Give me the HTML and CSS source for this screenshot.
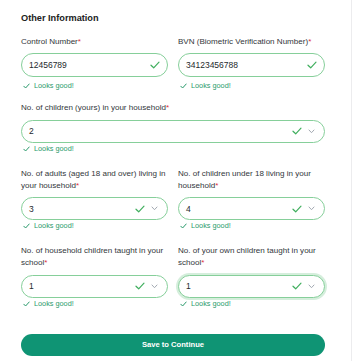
FILE: index.html
```html
<!DOCTYPE html>
<html>
<head>
<meta charset="utf-8">
<link rel="stylesheet" href="styles.css">
</head>
<body>
<div class="card">
  <h2 class="title">Other Information</h2>

  <div class="row row-first">
    <div class="field">
      <label class="label">Control Number<span class="req">*</span></label>
      <div class="control control-text">
        <span class="value">12456789</span>
        <svg class="ok" width="10" height="8" viewBox="0 0 10 8"><polyline points="1,4.2 3.7,6.8 9,1.2" fill="none" stroke="#3fae5d" stroke-width="1.2" stroke-linecap="round" stroke-linejoin="round"/></svg>
      </div>
      <div class="feedback feedback-text"><svg width="7" height="6" viewBox="0 0 7 6"><polyline points="0.8,3.2 2.6,5 6.2,1" fill="none" stroke="#2a9a6c" stroke-width="1" stroke-linecap="round" stroke-linejoin="round"/></svg>Looks good!</div>
    </div>
    <div class="field">
      <label class="label">BVN (Biometric Verification Number)<span class="req">*</span></label>
      <div class="control control-text">
        <span class="value">34123456788</span>
        <svg class="ok" width="10" height="8" viewBox="0 0 10 8"><polyline points="1,4.2 3.7,6.8 9,1.2" fill="none" stroke="#3fae5d" stroke-width="1.2" stroke-linecap="round" stroke-linejoin="round"/></svg>
      </div>
      <div class="feedback feedback-text"><svg width="7" height="6" viewBox="0 0 7 6"><polyline points="0.8,3.2 2.6,5 6.2,1" fill="none" stroke="#2a9a6c" stroke-width="1" stroke-linecap="round" stroke-linejoin="round"/></svg>Looks good!</div>
    </div>
  </div>

  <div class="row row-single">
    <div class="field">
      <label class="label">No. of children (yours) in your household<span class="req">*</span></label>
      <div class="control">
        <span class="value">2</span>
        <svg class="ok" width="10" height="8" viewBox="0 0 10 8"><polyline points="1,4.2 3.7,6.8 9,1.2" fill="none" stroke="#3fae5d" stroke-width="1.2" stroke-linecap="round" stroke-linejoin="round"/></svg>
        <svg class="chev" width="7" height="5" viewBox="0 0 7 5"><polyline points="1,1 3.5,3.7 6,1" fill="none" stroke="#a3a9b2" stroke-width="1" stroke-linecap="round" stroke-linejoin="round"/></svg>
      </div>
      <div class="feedback"><svg width="7" height="6" viewBox="0 0 7 6"><polyline points="0.8,3.2 2.6,5 6.2,1" fill="none" stroke="#2a9a6c" stroke-width="1" stroke-linecap="round" stroke-linejoin="round"/></svg>Looks good!</div>
    </div>
  </div>

  <div class="row">
    <div class="field">
      <label class="label">No. of adults (aged 18 and over) living in your household<span class="req">*</span></label>
      <div class="control">
        <span class="value">3</span>
        <svg class="ok" width="10" height="8" viewBox="0 0 10 8"><polyline points="1,4.2 3.7,6.8 9,1.2" fill="none" stroke="#3fae5d" stroke-width="1.2" stroke-linecap="round" stroke-linejoin="round"/></svg>
        <svg class="chev" width="7" height="5" viewBox="0 0 7 5"><polyline points="1,1 3.5,3.7 6,1" fill="none" stroke="#a3a9b2" stroke-width="1" stroke-linecap="round" stroke-linejoin="round"/></svg>
      </div>
      <div class="feedback"><svg width="7" height="6" viewBox="0 0 7 6"><polyline points="0.8,3.2 2.6,5 6.2,1" fill="none" stroke="#2a9a6c" stroke-width="1" stroke-linecap="round" stroke-linejoin="round"/></svg>Looks good!</div>
    </div>
    <div class="field">
      <label class="label">No. of children under 18 living in your household<span class="req">*</span></label>
      <div class="control">
        <span class="value">4</span>
        <svg class="ok" width="10" height="8" viewBox="0 0 10 8"><polyline points="1,4.2 3.7,6.8 9,1.2" fill="none" stroke="#3fae5d" stroke-width="1.2" stroke-linecap="round" stroke-linejoin="round"/></svg>
        <svg class="chev" width="7" height="5" viewBox="0 0 7 5"><polyline points="1,1 3.5,3.7 6,1" fill="none" stroke="#a3a9b2" stroke-width="1" stroke-linecap="round" stroke-linejoin="round"/></svg>
      </div>
      <div class="feedback"><svg width="7" height="6" viewBox="0 0 7 6"><polyline points="0.8,3.2 2.6,5 6.2,1" fill="none" stroke="#2a9a6c" stroke-width="1" stroke-linecap="round" stroke-linejoin="round"/></svg>Looks good!</div>
    </div>
  </div>

  <div class="row">
    <div class="field">
      <label class="label">No. of household children taught in your school<span class="req">*</span></label>
      <div class="control">
        <span class="value">1</span>
        <svg class="ok" width="10" height="8" viewBox="0 0 10 8"><polyline points="1,4.2 3.7,6.8 9,1.2" fill="none" stroke="#3fae5d" stroke-width="1.2" stroke-linecap="round" stroke-linejoin="round"/></svg>
        <svg class="chev" width="7" height="5" viewBox="0 0 7 5"><polyline points="1,1 3.5,3.7 6,1" fill="none" stroke="#a3a9b2" stroke-width="1" stroke-linecap="round" stroke-linejoin="round"/></svg>
      </div>
      <div class="feedback"><svg width="7" height="6" viewBox="0 0 7 6"><polyline points="0.8,3.2 2.6,5 6.2,1" fill="none" stroke="#2a9a6c" stroke-width="1" stroke-linecap="round" stroke-linejoin="round"/></svg>Looks good!</div>
    </div>
    <div class="field">
      <label class="label">No. of your own children taught in your school<span class="req">*</span></label>
      <div class="control control-focus">
        <span class="value">1</span>
        <svg class="ok" width="10" height="8" viewBox="0 0 10 8"><polyline points="1,4.2 3.7,6.8 9,1.2" fill="none" stroke="#3fae5d" stroke-width="1.2" stroke-linecap="round" stroke-linejoin="round"/></svg>
        <svg class="chev" width="7" height="5" viewBox="0 0 7 5"><polyline points="1,1 3.5,3.7 6,1" fill="none" stroke="#a3a9b2" stroke-width="1" stroke-linecap="round" stroke-linejoin="round"/></svg>
      </div>
      <div class="feedback"><svg width="7" height="6" viewBox="0 0 7 6"><polyline points="0.8,3.2 2.6,5 6.2,1" fill="none" stroke="#2a9a6c" stroke-width="1" stroke-linecap="round" stroke-linejoin="round"/></svg>Looks good!</div>
    </div>
  </div>

  <button class="btn">Save to Continue</button>
</div>
</body>
</html>
```

FILE: styles.css
```css
* { box-sizing: border-box; }
html, body { margin: 0; padding: 0; background: #fff; }
body {
  font-family: "Liberation Sans", Arial, Helvetica, sans-serif;
  color: #2b2f33;
}
.card {
  width: 352px;
  height: 361px;
  padding: 11px 26px 0 21px;
  border-right: 1px solid #ececee;
}
.title {
  margin: 0 0 11px 0;
  font-size: 9.2px;
  line-height: 14px;
  font-weight: bold;
  color: #222;
}
.row {
  display: grid;
  grid-template-columns: 1fr 1fr;
  column-gap: 10px;
  margin-bottom: 14px;
}
.row-first { margin-bottom: 11px; }
.row-single { grid-template-columns: 1fr; }
.field {
  display: flex;
  flex-direction: column;
  justify-content: flex-end;
}
.label {
  font-size: 8.05px;
  line-height: 12.3px;
  color: #33373b;
  margin-bottom: 5px;
}
.req { color: #e0303a; }
.control {
  height: 23px;
  border: 1px solid #86cf9a;
  border-radius: 12px;
  display: flex;
  align-items: center;
  padding: 0 9px 0 7px;
  background: #fff;
}
.control-text { height: 24px; padding-right: 7px; }
.control-focus {
  box-shadow: 0 0 0 2px rgba(134, 207, 154, 0.35);
}
.value {
  flex: 1;
  font-size: 8.5px;
  color: #25292d;
}
.ok { display: block; }
.chev { display: block; margin-left: 6px; }
.feedback {
  display: flex;
  align-items: center;
  gap: 4px;
  margin-top: 1px;
  padding-left: 2px;
  font-size: 7.3px;
  line-height: 10px;
  color: #2a9a6c;
}
.feedback-text { margin-top: 4px; }
.feedback svg { display: block; }
.btn {
  display: block;
  width: 100%;
  height: 22px;
  margin-top: 25px;
  border: 0;
  border-radius: 11px;
  background: #0f9474;
  color: #fff;
  font-family: "Liberation Sans", Arial, sans-serif;
  font-size: 7.6px;
  font-weight: bold;
  padding: 0;
}
```
